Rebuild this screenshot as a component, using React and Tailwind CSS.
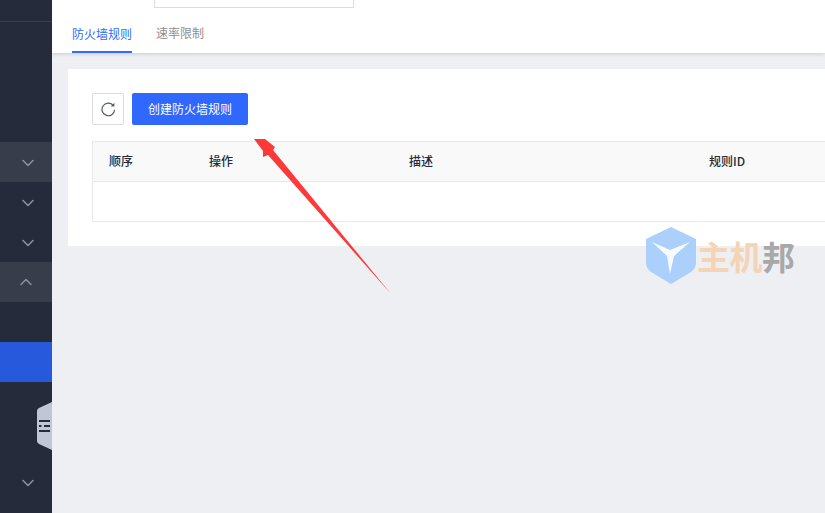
import React from 'react';
import { ChevronDown, ChevronUp } from 'lucide-react';

const sidebarRows = [
    { icon: 'down', tone: 'bg-[#383d4b]' },
    { icon: 'down', tone: '' },
    { icon: 'down', tone: '' },
    { icon: 'up', tone: 'bg-[#383d4b]' },
    { icon: null, tone: '' },
    { icon: null, tone: 'bg-[#2759dc]' },
    { icon: null, tone: '' },
    { icon: null, tone: '' },
    { icon: 'down', tone: '' },
];

const columns = [
    { label: '顺序', width: 'w-[100px]' },
    { label: '操作', width: 'w-[200px]' },
    { label: '描述', width: 'w-[300px]' },
    { label: '规则ID', width: 'w-[200px]' },
];

const Sidebar = () => (
    <aside className="w-[52px] shrink-0 bg-[#252b3a] relative">
        <div className="h-[22px] border-b border-[#3a3f4c]" />
        <div className="h-[120px]" />
        {sidebarRows.map((row, i) => (
            <div key={i} className={`h-10 flex items-center ${row.icon === 'up' ? 'pl-4' : 'pl-[18px] pt-[2px]'} ${row.tone}`}>
                {row.icon === 'down' && <ChevronDown size={20} strokeWidth={1.9} className="text-[#8d909a]" />}
                {row.icon === 'up' && <ChevronUp size={20} strokeWidth={1.9} className="text-[#8d909a]" />}
            </div>
        ))}
        {/* collapse handle */}
        <svg className="absolute left-[37px] top-[402px]" width="15" height="48" viewBox="0 0 15 48">
            <path d="M15 0 L2 6 Q0 7 0 9 L0 39 Q0 41 2 42 L15 48 Z" fill="#c0c6d6" />
            <rect x="2" y="18" width="11" height="2" fill="#252b3a" />
            <rect x="2" y="23" width="2.5" height="2" fill="#252b3a" />
            <rect x="7" y="23" width="6" height="2" fill="#252b3a" />
            <rect x="2" y="28" width="11" height="2" fill="#252b3a" />
        </svg>
    </aside>
);

const RefreshIcon = () => (
    <svg width="16" height="16" viewBox="0 0 16 16" fill="none">
        <path d="M13 4.2 A6.3 6.3 0 1 0 14.6 8.8" stroke="#555c66" strokeWidth="1.2" />
        <path d="M14.4 1.8 L14.4 5.4 L10.8 5.4 Z" fill="#555c66" />
    </svg>
);

const Watermark = () => (
    <div className="absolute left-[646px] top-[227px] flex items-center pointer-events-none">
        <svg width="50" height="57" viewBox="0 0 50 57">
            <path d="M25 0 L50 12 L50 36 Q50 41 45 45 L25 57 L5 45 Q0 41 0 36 L0 12 Z" fill="#abd0fb" />
            <path d="M6 15 L24 23 L44 15 L28 29 L24 47 L21 29 Z" fill="#ffffff" opacity="0.9" />
        </svg>
        <div className="ml-[1px] text-[33px] leading-[40px] font-bold tracking-[-0.5px] font-['Noto_Sans_CJK_SC',sans-serif]">
            <span className="text-[#f5d3b5]">主机</span>
            <span className="text-[#a8a8a8]">邦</span>
        </div>
    </div>
);

const Arrow = () => (
    <svg className="absolute left-[250px] top-[135px] pointer-events-none" width="145" height="162" viewBox="0 0 145 162">
        <polygon points="4,4 15,4 25,12 23,15 141,159 18,20 13,22 13,16" fill="#fd3a3a" />
    </svg>
);

const App = () => {
    return (
        <div className="h-screen w-screen flex overflow-hidden relative bg-[#eeeff3] text-xs font-['Noto_Sans_CJK_SC',sans-serif]">
            <Sidebar />
            <main className="flex-1 min-w-0 overflow-hidden">
                <header className="bg-white h-[53px] shadow-[0_1px_4px_rgba(0,0,0,0.15)] relative">
                    <div className="h-2 pl-[102px] flex items-end overflow-hidden">
                        <div className="w-[200px] h-8 shrink-0 border border-[#dcdcdc]" />
                    </div>
                    <div className="flex h-[45px] pl-5 gap-6">
                        <div className="w-[60px] flex items-center pt-[9px] text-[#2f6bff] border-b-2 border-[#2f6bff]">防火墙规则</div>
                        <div className="flex items-center pt-[7px] pb-[2px] text-[#8e8e8e]">速率限制</div>
                    </div>
                </header>
                <section className="mt-4 ml-4 w-[1000px] bg-white p-6">
                    <div className="flex gap-2">
                        <button className="w-8 h-8 flex items-center justify-center border border-[#dcdcdc] rounded-[2px]">
                            <RefreshIcon />
                        </button>
                        <button className="w-[116px] h-8 pb-[1px] rounded-[2px] bg-[#3067ff] text-white">创建防火墙规则</button>
                    </div>
                    <div className="mt-4 border border-[#e8e8e8]">
                        <div className="flex h-[39px] pb-[1px] items-center bg-[#f9f9f9] font-medium text-[#252b3a]">
                            {columns.map((col) => (
                                <div key={col.label} className={`${col.width} shrink-0 pl-4`}>{col.label}</div>
                            ))}
                        </div>
                        <div className="h-10 border-t border-[#e8e8e8]" />
                    </div>
                </section>
            </main>
            <Arrow />
            <Watermark />
        </div>
    );
};

export default App;
